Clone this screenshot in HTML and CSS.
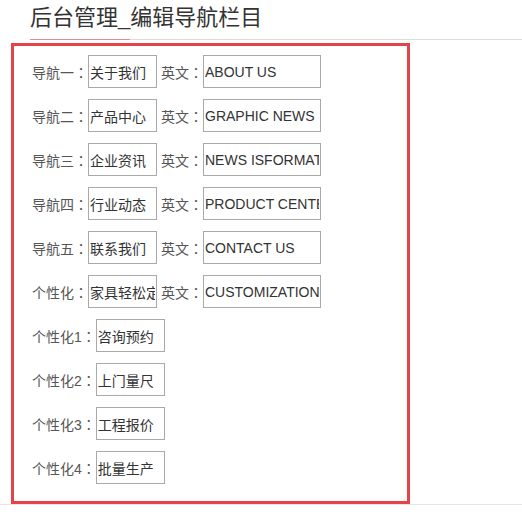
FILE: index.html
```html
<!DOCTYPE html>
<html lang="zh-CN">
<head>
<meta charset="utf-8">
<title>后台管理_编辑导航栏目</title>
<link rel="stylesheet" href="styles.css">
</head>
<body>
<div class="header">
  <h1 class="title">后台管理_编辑导航栏目</h1>
  <div class="tab-mark"></div>
</div>
<div class="wrap">
  <form class="panel">
    <div class="row"><span class="lbl">导航一<span class="colon">：</span></span><input class="ipt cn" value="关于我们"><span class="lbl en-lbl">英文<span class="colon">：</span></span><input class="ipt en" value="ABOUT US"></div>
    <div class="row"><span class="lbl">导航二<span class="colon">：</span></span><input class="ipt cn" value="产品中心"><span class="lbl en-lbl">英文<span class="colon">：</span></span><input class="ipt en" value="GRAPHIC NEWS"></div>
    <div class="row"><span class="lbl">导航三<span class="colon">：</span></span><input class="ipt cn" value="企业资讯"><span class="lbl en-lbl">英文<span class="colon">：</span></span><input class="ipt en" value="NEWS ISFORMATION"></div>
    <div class="row"><span class="lbl">导航四<span class="colon">：</span></span><input class="ipt cn" value="行业动态"><span class="lbl en-lbl">英文<span class="colon">：</span></span><input class="ipt en" value="PRODUCT CENTER"></div>
    <div class="row"><span class="lbl">导航五<span class="colon">：</span></span><input class="ipt cn" value="联系我们"><span class="lbl en-lbl">英文<span class="colon">：</span></span><input class="ipt en" value="CONTACT US"></div>
    <div class="row"><span class="lbl">个性化<span class="colon">：</span></span><input class="ipt cn" value="家具轻松定制"><span class="lbl en-lbl">英文<span class="colon">：</span></span><input class="ipt en" value="CUSTOMIZATION"></div>
    <div class="row"><span class="lbl">个性化1<span class="colon">：</span></span><input class="ipt cn" value="咨询预约"></div>
    <div class="row"><span class="lbl">个性化2<span class="colon">：</span></span><input class="ipt cn" value="上门量尺"></div>
    <div class="row"><span class="lbl">个性化3<span class="colon">：</span></span><input class="ipt cn" value="工程报价"></div>
    <div class="row"><span class="lbl">个性化4<span class="colon">：</span></span><input class="ipt cn" value="批量生产"></div>
  </form>
</div>
</body>
</html>
```
FILE: styles.css
```css
html, body {
  margin: 0;
  padding: 0;
  background: #fff;
}
body {
  font-family: "Liberation Sans", "Noto Sans CJK SC", sans-serif;
  color: #333;
}
.header {
  margin-left: 30px;
  height: 39px;
  border-bottom: 1px solid #dcdcdc;
  display: flex;
  flex-direction: column;
  justify-content: space-between;
}
.title {
  margin: 0;
  font-size: 22px;
  font-weight: normal;
  line-height: 36px;
  color: #333;
}
.tab-mark {
  width: 100px;
  height: 0;
  border-bottom: 1px solid #ea8a8a;
  margin-bottom: -1px;
}
.wrap {
  margin-top: 3px;
  padding-left: 11px;
  border-bottom: 1px solid #e6e6e6;
}
.panel {
  box-sizing: border-box;
  width: 399px;
  height: 461px;
  border: 3px solid #e5434a;
  padding: 9px 0 0 18px;
  display: flex;
  flex-direction: column;
  gap: 11px;
}
.row {
  display: flex;
  align-items: center;
  height: 33px;
}
.lbl {
  font-size: 14px;
  color: #555;
  white-space: nowrap;
}
.colon {
  font-family: "Noto Sans CJK JP", "Noto Sans CJK TC", sans-serif;
  font-feature-settings: "locl" 0;
}
.en-lbl {
  margin-left: 4px;
}
.ipt {
  box-sizing: border-box;
  height: 33px;
  margin: 0;
  padding: 0 1px;
  border: 1px solid #a9a9a9;
  border-radius: 0;
  font-family: "Liberation Sans", "Noto Sans CJK SC", sans-serif;
  font-size: 14px;
  color: #333;
  background: #fff;
  outline: none;
}
.ipt.cn {
  width: 69px;
}
.ipt.en {
  width: 118px;
}
```
